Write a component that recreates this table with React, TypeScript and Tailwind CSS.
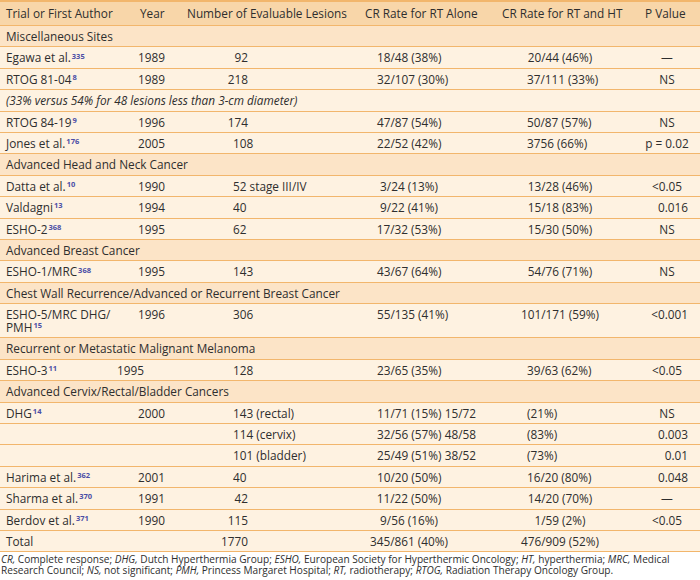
import type { ReactNode } from "react"

type Align = "l" | "r" | "c"
type Cell = [string, Align?]

const cols = "grid grid-cols-[133px_50px_179px_138px_138px_62px]"

// per-column alignment helpers (the source table is not consistently aligned)
const numCls: Record<Align, string> = { l: "pl-[50px]", r: "w-[65px] text-right", c: "w-[65px] text-center" }
const aloneCls: Record<Align, string> = { l: "pl-[15px]", r: "w-[94px] text-right", c: "w-[94px] text-center" }
const htCls: Record<Align, string> = { l: "pl-[27px]", r: "w-[120px] text-right", c: "w-[120px] text-center" }
const pCls: Record<Align, string> = { l: "pl-[20px]", r: "w-[50px] text-right", c: "w-[58px] text-center" }

type Row = {
  name?: string
  sup?: string
  year?: string
  yearShift?: boolean
  num?: Cell
  alone?: Cell
  ht?: Cell
  p?: Cell
}

const Sup = ({ children }: { children: ReactNode }) => (
  <sup className="text-[7.5px] font-bold text-[#4b4ea6] ml-[1px] leading-none">{children}</sup>
)

const Section = ({ children }: { children: ReactNode }) => (
  <div className="h-[21.4px] leading-[20.4px] pl-[6px] bg-[#fce4c7] border-b border-[#f2b66c] whitespace-nowrap">{children}</div>
)

function DataRow({ r, tall }: { r: Row; tall?: boolean }) {
  return (
    <div
      className={`${cols} ${tall ? "h-[34.4px]" : "h-[21.4px]"} leading-[20.4px] bg-[#fef2e1] border-b border-[#f2b66c] items-start`}
    >
      <div className={tall ? "pl-[6px] pt-[4px] leading-[12.5px]" : "pl-[6px] whitespace-nowrap"}>
        {tall ? (
          <>
            ESHO-5/MRC DHG/
            <br />
            PMH<Sup>{r.sup}</Sup>
          </>
        ) : (
          <>
            {r.name}
            {r.sup && <Sup>{r.sup}</Sup>}
          </>
        )}
      </div>
      <div className={r.yearShift ? "-ml-[16px]" : "pl-[5px]"}>{r.year}</div>
      <div className="whitespace-nowrap">{r.num && <div className={numCls[r.num[1] ?? "l"]}>{r.num[0]}</div>}</div>
      <div className="whitespace-nowrap">
        {r.alone && <div className={aloneCls[r.alone[1] ?? "l"]}>{r.alone[0]}</div>}
      </div>
      <div className="whitespace-nowrap">{r.ht && <div className={htCls[r.ht[1] ?? "l"]}>{r.ht[0]}</div>}</div>
      <div className="whitespace-nowrap">{r.p && <div className={pCls[r.p[1] ?? "c"]}>{r.p[0]}</div>}</div>
    </div>
  )
}

const misc: Row[] = [
  { name: "Egawa et al.", sup: "335", year: "1989", num: ["92", "r"], alone: ["18/48 (38%)"], ht: ["20/44 (46%)", "c"], p: ["—"] },
  { name: "RTOG 81-04", sup: "8", year: "1989", num: ["218", "r"], alone: ["32/107 (30%)"], ht: ["37/111 (33%)"], p: ["NS"] },
]
const misc2: Row[] = [
  { name: "RTOG 84-19", sup: "9", year: "1996", num: ["174", "r"], alone: ["47/87 (54%)"], ht: ["50/87 (57%)"], p: ["NS"] },
  { name: "Jones et al.", sup: "176", year: "2005", num: ["108"], alone: ["22/52 (42%)"], ht: ["3756 (66%)"], p: ["p = 0.02"] },
]
const headNeck: Row[] = [
  { name: "Datta et al.", sup: "10", year: "1990", num: ["52 stage III/IV"], alone: ["3/24 (13%)", "c"], ht: ["13/28 (46%)", "c"], p: ["<0.05"] },
  { name: "Valdagni", sup: "13", year: "1994", num: ["40"], alone: ["9/22 (41%)", "c"], ht: ["15/18 (83%)", "c"], p: ["0.016", "r"] },
  { name: "ESHO-2", sup: "368", year: "1995", num: ["62"], alone: ["17/32 (53%)", "c"], ht: ["15/30 (50%)", "c"], p: ["NS"] },
]
const breast: Row = { name: "ESHO-1/MRC", sup: "368", year: "1995", num: ["143"], alone: ["43/67 (64%)"], ht: ["54/76 (71%)", "c"], p: ["NS"] }
const chest: Row = { sup: "15", year: "1996", num: ["306"], alone: ["55/135 (41%)"], ht: ["101/171 (59%)", "c"], p: ["<0.001", "r"] }
const melanoma: Row = { name: "ESHO-3", sup: "11", year: "1995", yearShift: true, num: ["128"], alone: ["23/65 (35%)"], ht: ["39/63 (62%)"], p: ["<0.05"] }
const cervix: Row[] = [
  { name: "DHG", sup: "14", year: "2000", num: ["143 (rectal)"], alone: ["11/71 (15%) 15/72"], ht: ["(21%)"], p: ["NS"] },
  { num: ["114 (cervix)"], alone: ["32/56 (57%) 48/58"], ht: ["(83%)"], p: ["0.003", "r"] },
  { num: ["101 (bladder)"], alone: ["25/49 (51%) 38/52"], ht: ["(73%)"], p: ["0.01", "r"] },
  { name: "Harima et al.", sup: "362", year: "2001", num: ["40"], alone: ["10/20 (50%)"], ht: ["16/20 (80%)"], p: ["0.048", "r"] },
  { name: "Sharma et al.", sup: "370", year: "1991", num: ["42", "r"], alone: ["11/22 (50%)", "c"], ht: ["14/20 (70%)", "c"], p: ["—"] },
  { name: "Berdov et al.", sup: "371", year: "1990", num: ["115", "r"], alone: ["9/56 (16%)", "c"], ht: ["1/59 (2%)", "c"], p: ["<0.05"] },
  { name: "Total", num: ["1770", "r"], alone: ["345/861 (40%)", "c"], ht: ["476/909 (52%)", "c"] },
]

export default function App() {
  return (
    <div className="w-[700px] h-[580px] bg-white text-[#2e2e2e] text-[11.8px] overflow-hidden" style={{ fontFamily: "'Open Sans', Lato, sans-serif" }}>
      {/* Header */}
      <div className={`${cols} h-[23px] leading-[23px] bg-[#f8d6a9] border-t-2 border-b border-[#f2b66c] whitespace-nowrap box-content`}>
        <div className="pl-[6px]">Trial or First Author</div>
        <div className="pl-[7px]">Year</div>
        <div className="pl-[4px]">Number of Evaluable Lesions</div>
        <div className="pl-[3px]">CR Rate for RT Alone</div>
        <div className="pl-[2px]">CR Rate for RT and HT</div>
        <div className="pl-[7px]">P Value</div>
      </div>

      <Section>Miscellaneous Sites</Section>
      {misc.map((r, i) => <DataRow key={i} r={r} />)}
      <div className="h-[21.4px] leading-[20.4px] pl-[6px] italic bg-[#fef2e1] border-b border-[#f2b66c]">
        (33% versus 54% for 48 lesions less than 3-cm diameter)
      </div>
      {misc2.map((r, i) => <DataRow key={i} r={r} />)}

      <Section>Advanced Head and Neck Cancer</Section>
      {headNeck.map((r, i) => <DataRow key={i} r={r} />)}

      <Section>Advanced Breast Cancer</Section>
      <DataRow r={breast} />

      <Section>Chest Wall Recurrence/Advanced or Recurrent Breast Cancer</Section>
      <DataRow r={chest} tall />

      <Section>Recurrent or Metastatic Malignant Melanoma</Section>
      <DataRow r={melanoma} />

      <Section>Advanced Cervix/Rectal/Bladder Cancers</Section>
      {cervix.map((r, i) => <DataRow key={i} r={r} />)}

      {/* Footnote */}
      <div className="pt-[2px] pl-[1px] text-[10.1px] leading-[11px] whitespace-nowrap">
        <i>CR,</i> Complete response; <i>DHG,</i> Dutch Hyperthermia Group; <i>ESHO,</i> European Society for Hyperthermic Oncology; <i>HT,</i> hyperthermia; <i>MRC,</i> Medical
        <br />
        Research Council; <i>NS,</i> not significant; <i>PMH,</i> Princess Margaret Hospital; <i>RT,</i> radiotherapy; <i>RTOG,</i> Radiation Therapy Oncology Group.
      </div>
    </div>
  )
}
